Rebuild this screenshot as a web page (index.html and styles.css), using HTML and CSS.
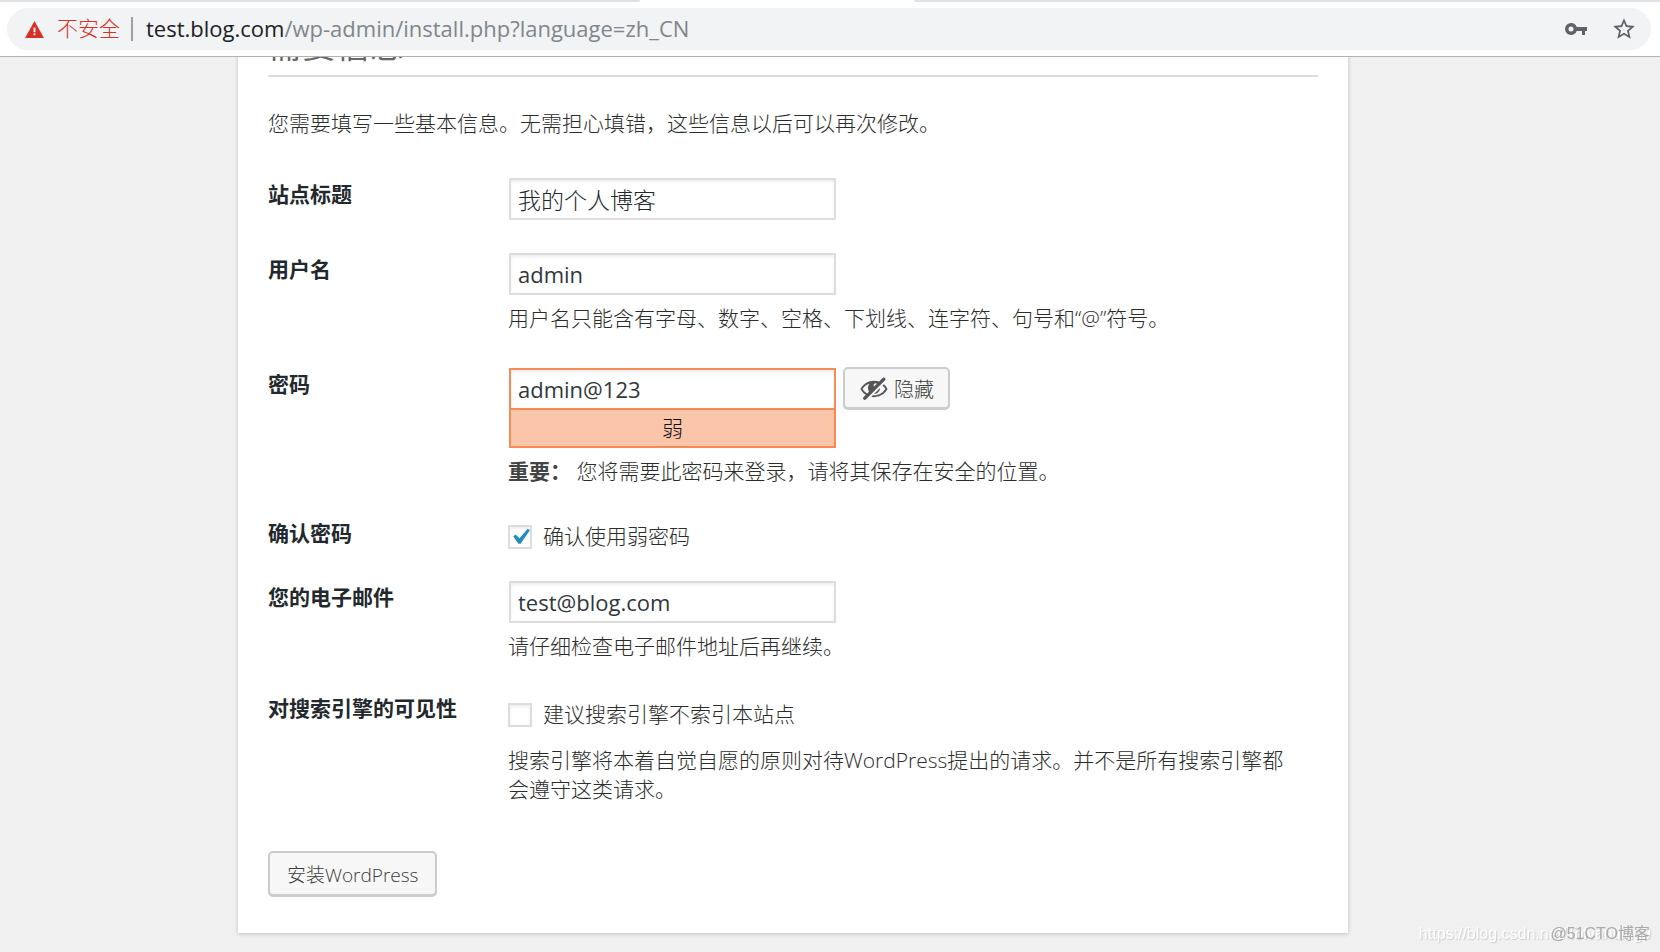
FILE: index.html
```html
<!DOCTYPE html>
<html lang="zh-CN">
<head>
<meta charset="utf-8">
<title>WordPress › 安装</title>
<link rel="stylesheet" href="styles.css">
</head>
<body>
<header class="toolbar">
  <div class="tabs"><span class="tab tab-left"></span><span class="tab tab-right"></span></div>
  <div class="omnibox">
    <svg class="warn" viewBox="0 0 20 18" aria-hidden="true"><path fill="#d93025" d="M10 0L20 18H0z"/><path fill="#f1f3f4" d="M9 7h2v5H9zM9 13h2v2H9z"/></svg>
    <span class="insecure">不安全</span>
    <span class="divider"></span>
    <span class="url"><span class="host">test.blog.com</span>/wp-admin/install.php?language=zh_CN</span>
    <button class="tool" type="button" aria-label="密码"><svg class="key" viewBox="0 0 22 12"><path fill="#5f6368" fill-rule="evenodd" d="M6 0a6 6 0 0 1 5.700 4H22v4h-2v4h-3V8h-5.300A6 6 0 1 1 6 0zM6 3.500a2.500 2.500 0 1 0 0 5 2.500 2.500 0 0 0 0-5z"/></svg></button>
    <button class="tool" type="button" aria-label="收藏"><svg class="star" viewBox="0 0 24 24"><path fill="#5f6368" d="M22 9.240l-7.190-.62L12 2 9.190 8.630 2 9.240l5.460 4.730L5.820 21 12 17.270 18.180 21l-1.630-7.030L22 9.240zM12 15.400l-3.760 2.270 1-4.280-3.320-2.880 4.380-.38L12 6.100l1.710 4.040 4.380.38-3.320 2.880 1 4.280L12 15.400z"/></svg></button>
  </div>
</header>
<main class="page">
  <section class="card">
    <h1 class="title">需要信息</h1>
    <p class="intro">您需要填写一些基本信息。无需担心填错，这些信息以后可以再次修改。</p>
    <form class="form">
      <div class="row">
        <label class="name" for="site">站点标题</label>
        <div><input class="field field-cjk" id="site" type="text" value="我的个人博客"></div>
      </div>
      <div class="row">
        <label class="name" for="user">用户名</label>
        <div>
          <input class="field" id="user" type="text" value="admin">
          <p class="help">用户名只能含有字母、数字、空格、下划线、连字符、句号和“@”符号。</p>
        </div>
      </div>
      <div class="row">
        <label class="name" for="pass">密码</label>
        <div>
          <div class="pass-line">
            <input class="field weak" id="pass" type="text" value="admin@123">
            <button class="button hide" type="button"><svg class="eye" viewBox="0 0 20 20" aria-hidden="true"><path fill="currentColor" d="M17.200 3.300l.16.17c.39.39.39 1.020 0 1.410L4.550 17.700c-.39.39-1.030.39-1.410 0l-.17-.17c-.39-.39-.39-1.020 0-1.410l1.590-1.600c-1.570-1-2.760-2.300-3.560-3.930.81-1.650 2.030-2.980 3.640-3.990S8.040 5.090 10 5.090c1.200 0 2.330.21 3.400.6l2.380-2.390c.39-.39 1.030-.39 1.420 0zm-7.090 4.010c-.23.25-.34.54-.34.88 0 .31.12.58.31.81l1.800-1.790c-.13-.12-.28-.21-.45-.26-.11-.01-.28-.03-.49-.04-.33.03-.6.16-.83.4zM2.400 10.590c.69 1.230 1.710 2.250 3.050 3.050l1.280-1.280c-.51-.69-.77-1.470-.77-2.360 0-1.060.36-1.980 1.090-2.760-1.040.27-1.960.7-2.760 1.260-.8.58-1.430 1.270-1.890 2.090zm13.220-2.130l.96-.96c1.020.86 1.830 1.890 2.420 3.090-.81 1.650-2.030 2.980-3.640 3.990s-3.400 1.510-5.360 1.510c-.63 0-1.240-.07-1.830-.18l1.070-1.070c.25.02.5.05.76.05 1.630 0 3.130-.4 4.500-1.210s2.400-1.840 3.100-3.100c-.46-.82-1.090-1.510-1.890-2.090zm-5.580 5.580l4-4c-.01 1.100-.41 2.040-1.180 2.810-.78.78-1.720 1.180-2.820 1.190z"/></svg>隐藏</button>
          </div>
          <div class="strength">弱</div>
          <p class="help"><strong>重要：</strong> 您将需要此密码来登录，请将其保存在安全的位置。</p>
        </div>
      </div>
      <div class="row row-confirm">
        <span class="name">确认密码</span>
        <label class="check"><span class="box"><input class="tick" type="checkbox" checked><svg class="mark" viewBox="0 0 20 20" aria-hidden="true"><path fill="#1e8cbe" d="M14.830 4.890l1.340.94-5.810 8.380H9.020L5.780 9.670l1.340-1.250 2.570 2.400z"/></svg></span>确认使用弱密码</label>
      </div>
      <div class="row row-mail">
        <label class="name" for="mail">您的电子邮件</label>
        <div>
          <input class="field" id="mail" type="email" value="test@blog.com">
          <p class="help">请仔细检查电子邮件地址后再继续。</p>
        </div>
      </div>
      <div class="row row-search">
        <span class="name">对搜索引擎的可见性</span>
        <div>
          <label class="check"><span class="box"><input class="tick" type="checkbox"><svg class="mark" viewBox="0 0 20 20" aria-hidden="true"><path fill="#1e8cbe" d="M14.830 4.890l1.340.94-5.810 8.380H9.020L5.780 9.670l1.340-1.250 2.570 2.400z"/></svg></span>建议搜索引擎不索引本站点</label>
          <p class="help">搜索引擎将本着自觉自愿的原则对待WordPress提出的请求。并不是所有搜索引擎都会遵守这类请求。</p>
        </div>
      </div>
      <button class="button install" type="button">安装WordPress</button>
    </form>
  </section>
</main>
<div class="source">https://blog.csdn.net/Tolvantiing9</div>
<div class="brand">@51CTO博客</div>
</body>
</html>
```
FILE: styles.css
```css
* { box-sizing: border-box; }
body {
  margin: 0;
  height: 100vh;
  display: flex;
  flex-direction: column;
  overflow: hidden;
  background: #f0f0f0;
  color: #2c2c2c;
  font: 300 21px/29px "Open Sans", "Noto Sans CJK SC", sans-serif;
}
p, h1 { margin: 0; }
svg { display: block; flex: none; }
button, input { font-family: inherit; font-weight: inherit; }
strong { color: #444; font-weight: 700; }

.toolbar { flex: none; background: #fff; border-bottom: 1px solid #b2b2b2; padding-bottom: 6px; }
.tabs { display: flex; justify-content: space-between; height: 2px; margin-bottom: 6px; }
.tab { background: #dee1e6; }
.tab-left { width: 640px; border-bottom-right-radius: 4px; }
.tab-right { width: 746px; border-bottom-left-radius: 4px; }
.omnibox {
  display: flex;
  align-items: center;
  height: 42px;
  margin: 0 9px 0 7px;
  padding: 0 14px 0 18px;
  border-radius: 21px;
  background: #f1f3f4;
  color: #80868b;
}
.warn { width: 19px; height: 17px; }
.insecure { margin-left: 13px; padding-bottom: 2px; color: #d93025; }
.divider { width: 2px; height: 24px; margin: 0 13px 0 11px; background: #9aa0a6; }
.url { flex: 1; padding-bottom: 2px; font-size: 22px; font-weight: 400; white-space: nowrap; }
.host { color: #202124; }
.tool { padding: 0; border: 0; background: none; margin-left: 24px; }
.key { width: 22px; height: 12px; }
.star { width: 26px; height: 26px; }

.page { flex: 1; min-height: 0; overflow: hidden; padding: 0 312px 0 238px; }
.card {
  margin-top: -30px;
  padding: 0 30px 37px;
  background: #fff;
  box-shadow: 0 1px 4px rgba(0, 0, 0, 0.2);
}
.title {
  padding-bottom: 12px;
  border-bottom: 2px solid #ddd;
  color: #666;
  font-size: 34px;
  line-height: 36px;
  font-weight: 400;
}
.intro { margin: 32px 0 40px; }
.row { display: grid; grid-template-columns: 240px 1fr; margin-bottom: 33px; }
.name { padding-top: 2px; color: #23282d; font-weight: 700; }
.row > :last-child { padding-right: 30px; }
.field {
  display: block;
  width: 327px;
  height: 42px;
  margin-left: 1px;
  padding: 1px 7px 2px;
  border: 2px solid #ddd;
  box-shadow: inset 0 2px 3px rgba(0, 0, 0, 0.07);
  background: #fff;
  color: #32373c;
  font-size: 22px;
  font-weight: 400;
}
.field-cjk { color: #23282d; font-size: 23px; font-weight: 300; }
.help { margin: 9px 0 2px; }
.pass-line { display: flex; gap: 7px; }
.weak { border-color: #f78b53; }
.strength {
  width: 327px;
  height: 40px;
  margin: -2px 0 0 1px;
  border: 2px solid #f78b53;
  background: #fbc5a9;
  color: #111;
  line-height: 36px;
  text-align: center;
}
.button {
  display: flex;
  align-items: center;
  border: 2px solid #ccc;
  border-radius: 5px;
  box-shadow: 0 1px 0 #ccc;
  background: #f7f7f7;
  color: #3c3c3c;
  font-size: 20px;
}
.hide { height: 42px; margin-top: -1px; padding: 0 14px; gap: 5px; }
.eye { width: 30px; height: 30px; color: #555; }
.row-confirm { margin-top: -4px; margin-bottom: 30px; }
.row-confirm .check { padding-top: 5px; }
.row-search { margin-top: -4px; margin-bottom: 45px; }
.row-search .check { padding-top: 8px; }
.row-search .help { margin-top: 17px; }
.check { display: flex; align-items: center; gap: 11px; }
.box {
  display: grid;
  grid-template: 24px / 24px;
  place-items: center;
  place-content: center;
  width: 24px;
  height: 24px;
}
.box > * { grid-area: 1 / 1; }
.tick {
  appearance: none;
  width: 24px;
  height: 24px;
  margin: 0;
  border: 2px solid #ddd;
  background: #fff;
  box-shadow: inset 0 2px 3px rgba(0, 0, 0, 0.07);
}
.mark { width: 32px; height: 32px; visibility: hidden; pointer-events: none; }
.tick:checked + .mark { visibility: visible; }
.install { height: 45px; padding: 0 17px; font-size: 19px; }

.source, .brand {
  position: fixed;
  bottom: 4px;
  font: 16px/28px "Liberation Sans", "Noto Sans CJK SC", sans-serif;
  white-space: nowrap;
}
.source { right: 9px; color: #fff; text-shadow: 1px 1px 1px #ccc; }
.brand { right: 10px; color: #aaa; }
```
